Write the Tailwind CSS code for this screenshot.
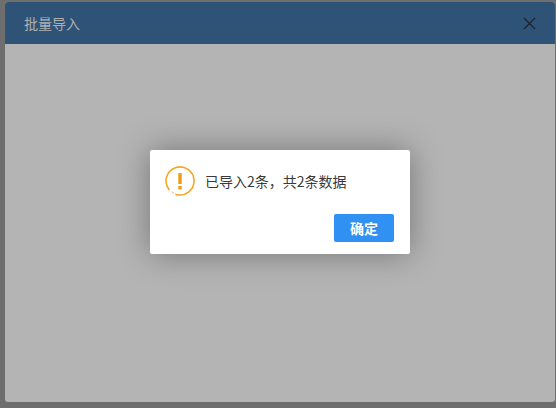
<!DOCTYPE html>
<html><head><meta charset="utf-8"><script src="https://cdn.jsdelivr.net/npm/@tailwindcss/browser@4"></script></head>
<body class="m-0">
<div class="relative w-[556px] h-[408px] overflow-hidden bg-[#6e6e6e] pt-[2px] pl-[5px] pr-px pb-[6px] font-['Microsoft_YaHei','Noto_Sans_CJK_SC',sans-serif]">
  <div class="h-full flex flex-col rounded-[3px] overflow-hidden bg-[#b4b4b4]">
    <div class="h-[42px] shrink-0 bg-[#2e5377] flex items-center justify-between pl-[19px] pr-[19px]">
      <span class="text-[14px] text-[#b0b0b0]">批量导入</span>
      <svg class="w-[13px] h-[13px]" viewBox="0 0 13 13" fill="none" stroke="#1b2430" stroke-width="1.4"><path d="M1 1l11 11M12 1L1 12"/></svg>
    </div>
  </div>
  <div class="absolute left-[150px] top-[150px] w-[260px] h-[104px] bg-white rounded-[2px] shadow-[0_0_32px_rgba(0,0,0,0.35)] flex flex-col">
    <div class="flex items-center pl-[15px] pt-[16px] gap-[10px]">
      <svg class="w-[30px] h-[30px] shrink-0" viewBox="0 0 30 30" fill="none">
        <path d="M11 28.4A14 14 0 1 0 4 23.6" stroke="#f5a623" stroke-width="1.6" stroke-linecap="round"/>
        <path d="M6.5 25.6A14 14 0 0 0 9 27.6" stroke="#f8c678" stroke-width="1.2"/>
        <rect x="13.3" y="7" width="3.4" height="11" fill="#f39c12"/>
        <rect x="13.3" y="20" width="3.4" height="3.4" fill="#f39c12"/>
      </svg>
      <span class="text-[14px] leading-[20px] text-[#3a3a3a]">已导入2条，共2条数据</span>
    </div>
    <div class="mt-auto flex justify-end pr-[16px] pb-[12px]">
      <button class="w-[60px] h-[28px] bg-[#3091f2] text-white text-[14px] font-bold rounded-[2px]">确定</button>
    </div>
  </div>
</div>
</body></html>
